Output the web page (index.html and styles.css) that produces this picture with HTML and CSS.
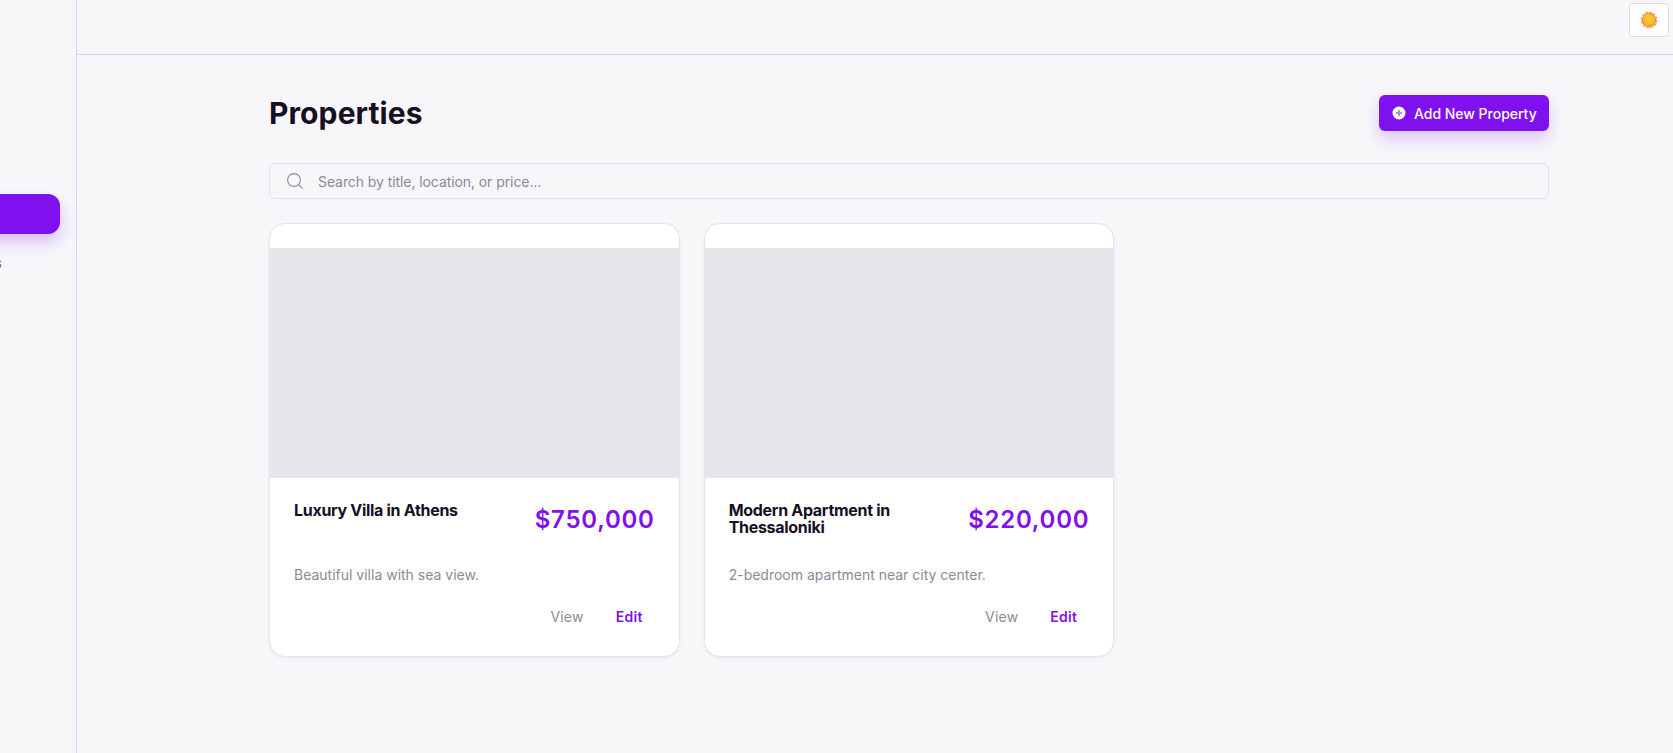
FILE: index.html
```html
<!DOCTYPE html>
<html lang="en">
<head>
    <meta charset="UTF-8">
    <meta name="viewport" content="width=device-width, initial-scale=1.0">
    <title>Properties</title>
    <link rel="stylesheet" href="styles.css">
</head>
<body>
    <aside class="sidebar">
        <nav class="side-nav">
            <a class="side-link active" href="#">Properties</a>
            <a class="side-link" href="#">Settings</a>
        </nav>
    </aside>
    <div class="content">
        <header class="topbar">
            <button class="theme-btn" type="button" aria-label="Toggle theme">
                <svg width="18" height="18" viewBox="0 0 18 18">
                    <defs>
                        <radialGradient id="sun-fill" cx="50%" cy="40%" r="60%">
                            <stop offset="0%" stop-color="#fbd232"/>
                            <stop offset="65%" stop-color="#f8bd28"/>
                            <stop offset="100%" stop-color="#f3a02a"/>
                        </radialGradient>
                    </defs>
                    <circle cx="9" cy="9" r="7.2" fill="#f47f30"/>
                    <circle cx="9" cy="9" r="7.8" fill="none" stroke="#f47f30" stroke-width="1" stroke-dasharray="2.6 1.48"/>
                    <circle cx="9" cy="9" r="6.4" fill="url(#sun-fill)"/>
                </svg>
            </button>
        </header>
        <main class="main">
            <div class="page-head">
                <h1>Properties</h1>
                <button class="add-btn" type="button">
                    <svg width="14" height="14" viewBox="0 0 14 14">
                        <circle cx="7" cy="7" r="6.5" fill="#fff"/>
                        <path d="M7 4v6M4 7h6" stroke="#b98af5" stroke-width="2"/>
                    </svg>
                    Add New Property
                </button>
            </div>
            <div class="search">
                <svg width="18" height="18" viewBox="0 0 18 18" fill="none" stroke="#8f8a9b" stroke-width="1.1">
                    <circle cx="8" cy="8" r="6.4"/>
                    <path d="M12.7 12.7l4 4"/>
                </svg>
                <input type="text" placeholder="Search by title, location, or price...">
            </div>
            <div class="cards">
                <div class="card">
                    <div class="card-photo"></div>
                    <div class="card-body">
                        <div class="card-top">
                            <h3>Luxury Villa in Athens</h3>
                            <span class="price">$750,000</span>
                        </div>
                        <p>Beautiful villa with sea view.</p>
                        <div class="card-actions">
                            <a class="view" href="#">View</a>
                            <a class="edit" href="#">Edit</a>
                        </div>
                    </div>
                </div>
                <div class="card">
                    <div class="card-photo"></div>
                    <div class="card-body">
                        <div class="card-top">
                            <h3>Modern Apartment in Thessaloniki</h3>
                            <span class="price">$220,000</span>
                        </div>
                        <p>2-bedroom apartment near city center.</p>
                        <div class="card-actions">
                            <a class="view" href="#">View</a>
                            <a class="edit" href="#">Edit</a>
                        </div>
                    </div>
                </div>
            </div>
        </main>
    </div>
</body>
</html>
```

FILE: styles.css
```css
* {
    box-sizing: border-box;
}
body {
    font-family: Inter, "Noto Sans", sans-serif;
    margin: 0;
    height: 753px;
    overflow: hidden;
    display: flex;
    background-color: #f7f7fa;
    color: #170f24;
}
.sidebar {
    width: 77px;
    flex-shrink: 0;
    overflow: hidden;
    border-right: 1px solid #dfccfb;
}
.side-nav {
    width: 260px;
    margin-left: -200px;
    padding-top: 194px;
    display: flex;
    flex-direction: column;
    gap: 9px;
}
.side-link {
    display: block;
    height: 40px;
    line-height: 40px;
    text-align: right;
    font-size: 14px;
    color: #6f6a7c;
    text-decoration: none;
    border-radius: 12px;
    padding-right: 58px;
}
.side-link.active {
    background-color: #8010ee;
    color: #8010ee;
    box-shadow: 0 8px 16px rgba(128,16,238,0.25);
}
.content {
    flex: 1;
    min-width: 0;
}
.topbar {
    height: 55px;
    border-bottom: 1px solid #dfccfb;
    display: flex;
    justify-content: flex-end;
    padding: 3px 4px 0 0;
}
.theme-btn {
    width: 40px;
    height: 34px;
    background-color: white;
    border: 1px solid #dcdce4;
    border-radius: 4px;
    padding: 0;
    display: flex;
    align-items: center;
    justify-content: center;
}
.main {
    padding: 40px 124px 0 192px;
}
.page-head {
    display: flex;
    justify-content: space-between;
    align-items: center;
    height: 36px;
    margin-bottom: 32px;
}
h1 {
    margin: 0;
    font-size: 30px;
    line-height: 36px;
    font-weight: 700;
    letter-spacing: 0.1px;
}
.add-btn {
    width: 170px;
    height: 36px;
    display: flex;
    align-items: center;
    gap: 8px;
    padding: 0 0 0 13px;
    background-color: #8010ee;
    color: white;
    border: none;
    border-radius: 6px;
    font-family: inherit;
    font-size: 14px;
    font-weight: 500;
    letter-spacing: -0.02px;
    white-space: nowrap;
    box-shadow: 0 8px 16px rgba(128,16,238,0.22);
}
.search {
    height: 36px;
    display: flex;
    align-items: center;
    gap: 14px;
    padding: 0 16px;
    border: 1px solid #e3e3ec;
    border-radius: 6px;
    margin-bottom: 24px;
}
.search input {
    flex: 1;
    border: none;
    background: none;
    outline: none;
    padding: 0;
    font-family: inherit;
    font-size: 14px;
    letter-spacing: -0.08px;
}
.search input::placeholder {
    color: #8d8899;
    opacity: 1;
}
.cards {
    display: grid;
    grid-template-columns: repeat(3, 1fr);
    gap: 24px;
}
.card {
    height: 434px;
    padding-top: 24px;
    background-color: white;
    border: 1px solid #e5e5ec;
    border-radius: 16px;
    box-shadow: 0 1px 3px rgba(0,0,0,0.06);
    overflow: hidden;
}
.card-photo {
    height: 230px;
    background-color: #e5e6ea;
}
.card-body {
    padding: 24px 24px 0;
}
.card-top {
    display: flex;
    justify-content: space-between;
    gap: 16px;
    height: 63px;
}
h3 {
    margin: 0;
    font-size: 16px;
    line-height: 17px;
    font-weight: 700;
    letter-spacing: -0.3px;
}
.price {
    font-size: 24px;
    line-height: 32px;
    padding-top: 2px;
    font-weight: 600;
    color: #8010ee;
    white-space: nowrap;
    letter-spacing: 0.75px;
}
.card-body p {
    margin: 0 0 22px;
    font-size: 14px;
    line-height: 20px;
    color: #8d8899;
}
.card-actions {
    display: flex;
    justify-content: flex-end;
    gap: 32px;
    padding-right: 12px;
    font-size: 14px;
    line-height: 20px;
}
.card-actions a {
    text-decoration: none;
}
.view {
    color: #8d8899;
    letter-spacing: 0.2px;
}
.edit {
    color: #8010ee;
    font-weight: 600;
    letter-spacing: 0.3px;
}
```
